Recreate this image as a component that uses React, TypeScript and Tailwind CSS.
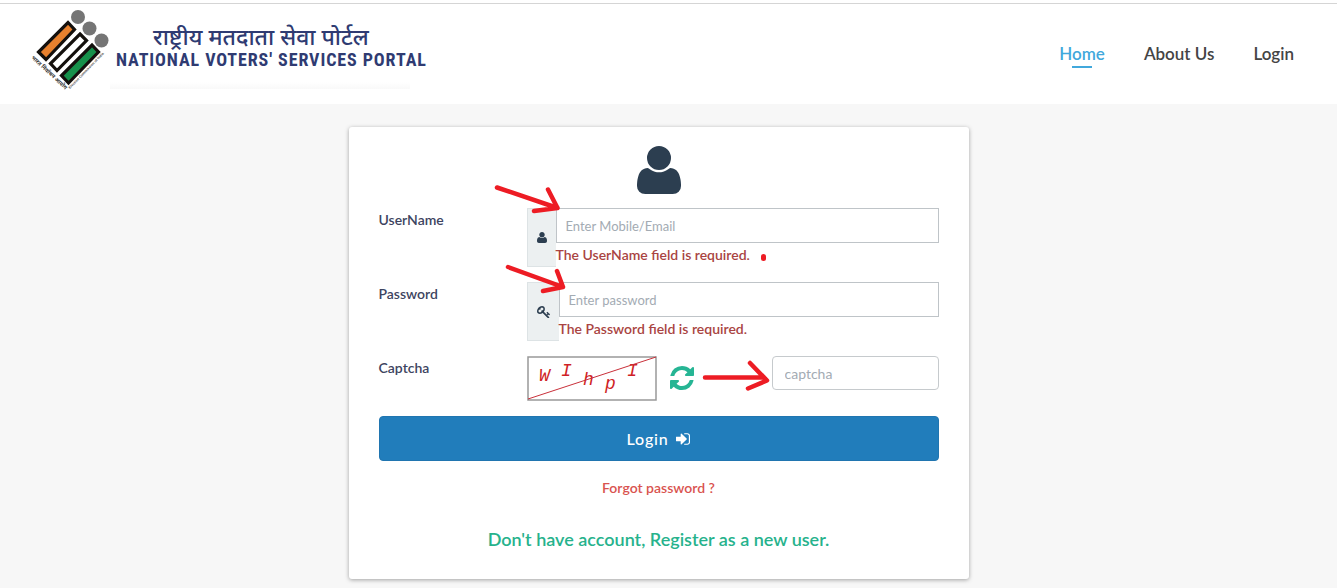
import type { ReactNode } from 'react';

type GlyphProps = {
    path: string;
    viewBox: string;
    className?: string;
};

const ICONS = {
    user: {
        viewBox: '0 -1408 1408 1536',
        path: 'M1408 131q0 -120 -73 -189.5t-194 -69.5h-874q-121 0 -194 69.5t-73 189.5q0 53 3.5 103.5t14 109t26.5 108.5t43 97.5t62 81t85.5 53.5t111.5 20q9 0 42 -21.5t74.5 -48t108 -48t133.5 -21.5t133.5 21.5t108 48t74.5 48t42 21.5q61 0 111.5 -20t85.5 -53.5t62 -81t43 -97.5t26.5 -108.5t14 -109t3.5 -103.5zM1088 1024q0 -159 -112.5 -271.5t-271.5 -112.5t-271.5 112.5t-112.5 271.5t112.5 271.5t271.5 112.5t271.5 -112.5t112.5 -271.5z',
    },
    key: {
        viewBox: '0 -1408 1683 1536',
        path: 'M832 1024q0 80 -56 136t-136 56t-136 -56t-56 -136q0 -42 19 -83q-41 19 -83 19q-80 0 -136 -56t-56 -136t56 -136t136 -56t136 56t56 136q0 42 -19 83q41 -19 83 -19q80 0 136 56t56 136zM1683 320q0 -17 -49 -66t-66 -49q-9 0 -28.5 16t-36.5 33t-38.5 40t-24.5 26l-96 -96l220 -220q28 -28 28 -68q0 -42 -39 -81t-81 -39q-40 0 -68 28l-671 671q-176 -131 -365 -131q-163 0 -265.5 102.5t-102.5 265.5q0 160 95 313t248 248t313 95q163 0 265.5 -102.5t102.5 -265.5q0 -189 -131 -365l355 -355l96 96q-3 3 -26 24.5t-40 38.5t-33 36.5t-16 28.5q0 17 49 66t66 49q13 0 23 -10q6 -6 46 -44.5t82 -79.5t86.5 -86t73 -78t28.5 -41z',
    },
    refresh: {
        viewBox: '0 -1408 1536 1536',
        path: 'M1511 480q0 -5 -1 -7q-64 -268 -268 -434.5t-478 -166.5q-146 0 -282.5 55t-243.5 157l-129 -129q-19 -19 -45 -19t-45 19t-19 45v448q0 26 19 45t45 19h448q26 0 45 -19t19 -45t-19 -45l-137 -137q71 -66 161 -102t187 -36q134 0 250 65t186 179q11 17 53 117q8 23 30 23h192q13 0 22.5 -9.5t9.5 -22.5zM1536 1280v-448q0 -26 -19 -45t-45 -19h-448q-26 0 -45 19t-19 45t19 45l138 138q-148 137 -349 137q-134 0 -250 -65t-186 -179q-11 -17 -53 -117q-8 -23 -30 -23h-199q-13 0 -22.5 9.5t-9.5 22.5v7q65 268 270 434.5t480 166.5q146 0 284 -55.5t245 -156.5l130 129q19 19 45 19t45 -19t19 -45z',
    },
    signIn: {
        viewBox: '0 -1280 1536 1280',
        path: 'M1184 640q0 -26 -19 -45l-544 -544q-19 -19 -45 -19t-45 19t-19 45v288h-448q-26 0 -45 19t-19 45v384q0 26 19 45t45 19h448v288q0 26 19 45t45 19t45 -19l544 -544q19 -19 19 -45zM1536 992v-704q0 -119 -84.5 -203.5t-203.5 -84.5h-320q-32 0 -32 32v64q0 32 32 32h320q66 0 113 47t47 113v704q0 66 -47 113t-113 47h-320q-32 0 -32 32v64q0 32 32 32h320q119 0 203.5 -84.5t84.5 -203.5z',
    },
};

function Glyph({ path, viewBox, className }: GlyphProps) {
    return (
        <svg viewBox={viewBox} className={className} fill="currentColor" aria-hidden="true">
            <path d={path} transform="scale(1 -1)" />
        </svg>
    );
}

function Emblem() {
    return (
        <svg viewBox="0 0 80 82" className="h-[82px] w-20 shrink-0 overflow-visible" aria-hidden="true">
            <g fill="#757575">
                <circle cx="48" cy="7" r="7" />
                <circle cx="59.500" cy="18.500" r="7" />
                <circle cx="71.500" cy="30.500" r="7" />
            </g>
            <g stroke="#14100d" strokeWidth="3.200">
                <path d="M38 12.500l6.500 7L16 49.500l-7.500-7.500z" fill="#e8812e" />
                <path d="M50 24l6.500 6.500L27 60.500l-6.500-7z" fill="#fff" />
                <path d="M62 35l6.500 7L38.500 73l-7-7.500z" fill="#17914b" />
            </g>
            <text transform="translate(1 48) rotate(43)" fontSize="5.500" fontWeight="700" fontFamily="'Noto Sans', sans-serif" fill="#333">
                भारत निर्वाचन आयोग
            </text>
            <text transform="translate(40 79) rotate(-46)" fontSize="3.500" fontWeight="700" fontFamily="'Liberation Sans', sans-serif" fill="#444">
                Election Commission of India
            </text>
        </svg>
    );
}

function Header() {
    return (
        <header className="flex min-h-[101px] items-start justify-between border-t border-[#d5d5d5] bg-white pt-[6px] pr-[43px] pl-[30px]">
            <a href="#" className="flex items-start">
                <Emblem />
                <span className="block text-[#2f3b72]">
                    <span className="mt-3 block pl-[43px] font-['Noto_Sans',sans-serif] text-[23px] leading-7 font-medium">
                        राष्ट्रीय मतदाता सेवा पोर्टल
                    </span>
                    <span className="block pl-[6px] font-['Liberation_Sans_Narrow','Roboto_Condensed','Liberation_Sans',sans-serif] text-[18px] leading-5 font-bold tracking-wider whitespace-nowrap">
                        NATIONAL VOTERS' SERVICES PORTAL
                    </span>
                    <span className="mt-3 block h-[7px] w-[300px] bg-linear-to-b from-white to-[#f9f9f9]" />
                </span>
            </a>
            <nav className="flex gap-[39px] pt-8 text-[17px] leading-6 font-semibold text-[#444]">
                <a href="#" className="flex flex-col items-center text-[#41a8dc]">
                    Home
                    <span className="h-[2px] w-5 bg-[#41a8dc]" />
                </a>
                <a href="#">About Us</a>
                <a href="#">Login</a>
            </nav>
        </header>
    );
}

type FieldProps = {
    id: string;
    label: string;
    type: string;
    placeholder: string;
    error: string;
    icon: ReactNode;
};

function Field({ id, label, type, placeholder, error, icon }: FieldProps) {
    return (
        <div className="mb-[15px] grid grid-cols-[148px_1fr]">
            <label htmlFor={id} className="pt-[3px] text-sm leading-[18px] font-semibold text-[#3d4460]">
                {label}
            </label>
            <div className="flex">
                <span className="flex items-center border border-r-0 border-[#dde3e5] bg-[#ecf0f1] px-[9px] text-[#2c3e50]">
                    {icon}
                </span>
                <div className="flex-1">
                    <input
                        id={id}
                        type={type}
                        placeholder={placeholder}
                        className="block h-[35px] w-full border border-[#bfc4c8] bg-white px-[9px] text-[13px] placeholder:text-[#a3abb3] focus:outline-none"
                    />
                    <p className="h-6 text-sm leading-6 font-semibold text-[#a94442]">{error}</p>
                </div>
            </div>
        </div>
    );
}

const CAPTCHA = [
    { char: 'W', x: 12, y: 25 },
    { char: 'I', x: 34, y: 20 },
    { char: 'h', x: 56, y: 29 },
    { char: 'p', x: 78, y: 33 },
    { char: 'I', x: 100, y: 20 },
];

function CaptchaImage() {
    return (
        <svg viewBox="0 0 130 45" className="h-[45px] w-[130px]" role="img" aria-label="captcha">
            <rect x="1" y="1" width="128" height="43" fill="#fff" stroke="#999" strokeWidth="1.500" />
            <g fill="#cf1f26" fontSize="18" fontStyle="italic" fontFamily="'Liberation Mono', monospace">
                {CAPTCHA.map((item, idx) => (
                    <text key={idx} x={item.x} y={item.y}>
                        {item.char}
                    </text>
                ))}
            </g>
            <path d="M1 43L129 1" stroke="#c9303a" />
        </svg>
    );
}

// Hand-drawn red pointers over the form
function Pointers() {
    return (
        <svg
            viewBox="0 0 620 452"
            className="pointer-events-none absolute top-0 left-0 h-[452px] w-[620px]"
            fill="none"
            stroke="#ed1c24"
            strokeWidth="4.500"
            strokeLinecap="round"
            strokeLinejoin="round"
            aria-hidden="true"
        >
            <path d="M148 60.500L208.500 81M199 62.500L208.500 81L185 84" />
            <path d="M159 140L214 160M208 144L214 160L194 164" />
            <path d="M356 250.500H415M401 236L418 253.500L399 261.500" />
            <path d="M414.500 129.500v2" strokeWidth="5" />
        </svg>
    );
}

export default function App() {
    return (
        <div className="min-h-screen bg-[#f7f7f7] font-['Lato',sans-serif]">
            <div className="h-[3px] bg-white" />
            <Header />
            <main className="pt-[23px] pr-9 pb-2 pl-4">
                <div className="relative mx-auto max-w-[620px] rounded-[3px] bg-white px-[30px] pt-[19px] pb-[27px] shadow-[0_1px_4px_rgba(0,0,0,0.35)]">
                    <Glyph {...ICONS.user} className="mx-auto mb-[14px] h-12 w-11 text-[#2c3e50]" />
                    <form>
                        <Field
                            id="username"
                            label="UserName"
                            type="text"
                            placeholder="Enter Mobile/Email"
                            error="The UserName field is required."
                            icon={<Glyph {...ICONS.user} className="h-[11px] w-[10px]" />}
                        />
                        <Field
                            id="password"
                            label="Password"
                            type="password"
                            placeholder="Enter password"
                            error="The Password field is required."
                            icon={<Glyph {...ICONS.key} className="h-3 w-[13px]" />}
                        />
                        <div className="mb-[15px] grid grid-cols-[148px_1fr]">
                            <label htmlFor="captcha" className="pt-[3px] text-sm leading-[18px] font-semibold text-[#3d4460]">
                                Captcha
                            </label>
                            <div className="flex items-start">
                                <CaptchaImage />
                                <button type="button" aria-label="Refresh captcha" className="mt-[10px] ml-[13px] text-[#26b594]">
                                    <Glyph {...ICONS.refresh} className="size-6" />
                                </button>
                                <input
                                    id="captcha"
                                    type="text"
                                    placeholder="captcha"
                                    className="ml-auto h-[34px] w-[167px] rounded border border-[#c6cacd] bg-white px-3 text-sm placeholder:text-[#a3abb3] focus:outline-none"
                                />
                            </div>
                        </div>
                        <button
                            type="submit"
                            className="flex h-[45px] w-full items-center justify-center gap-2 rounded border border-[#2075b0] bg-[#217dbb] text-base font-medium tracking-wider text-white"
                        >
                            Login
                            <Glyph {...ICONS.signIn} className="h-3 w-[14px]" />
                        </button>
                    </form>
                    <p className="mt-[17px] text-center text-sm leading-5 font-semibold text-[#d9534f]">
                        <a href="#">Forgot password ?</a>
                    </p>
                    <p className="mt-7 text-center text-lg leading-[26px] font-semibold text-[#26b28c]">
                        <a href="#">Don't have account, Register as a new user.</a>
                    </p>
                    <Pointers />
                </div>
            </main>
        </div>
    );
}
